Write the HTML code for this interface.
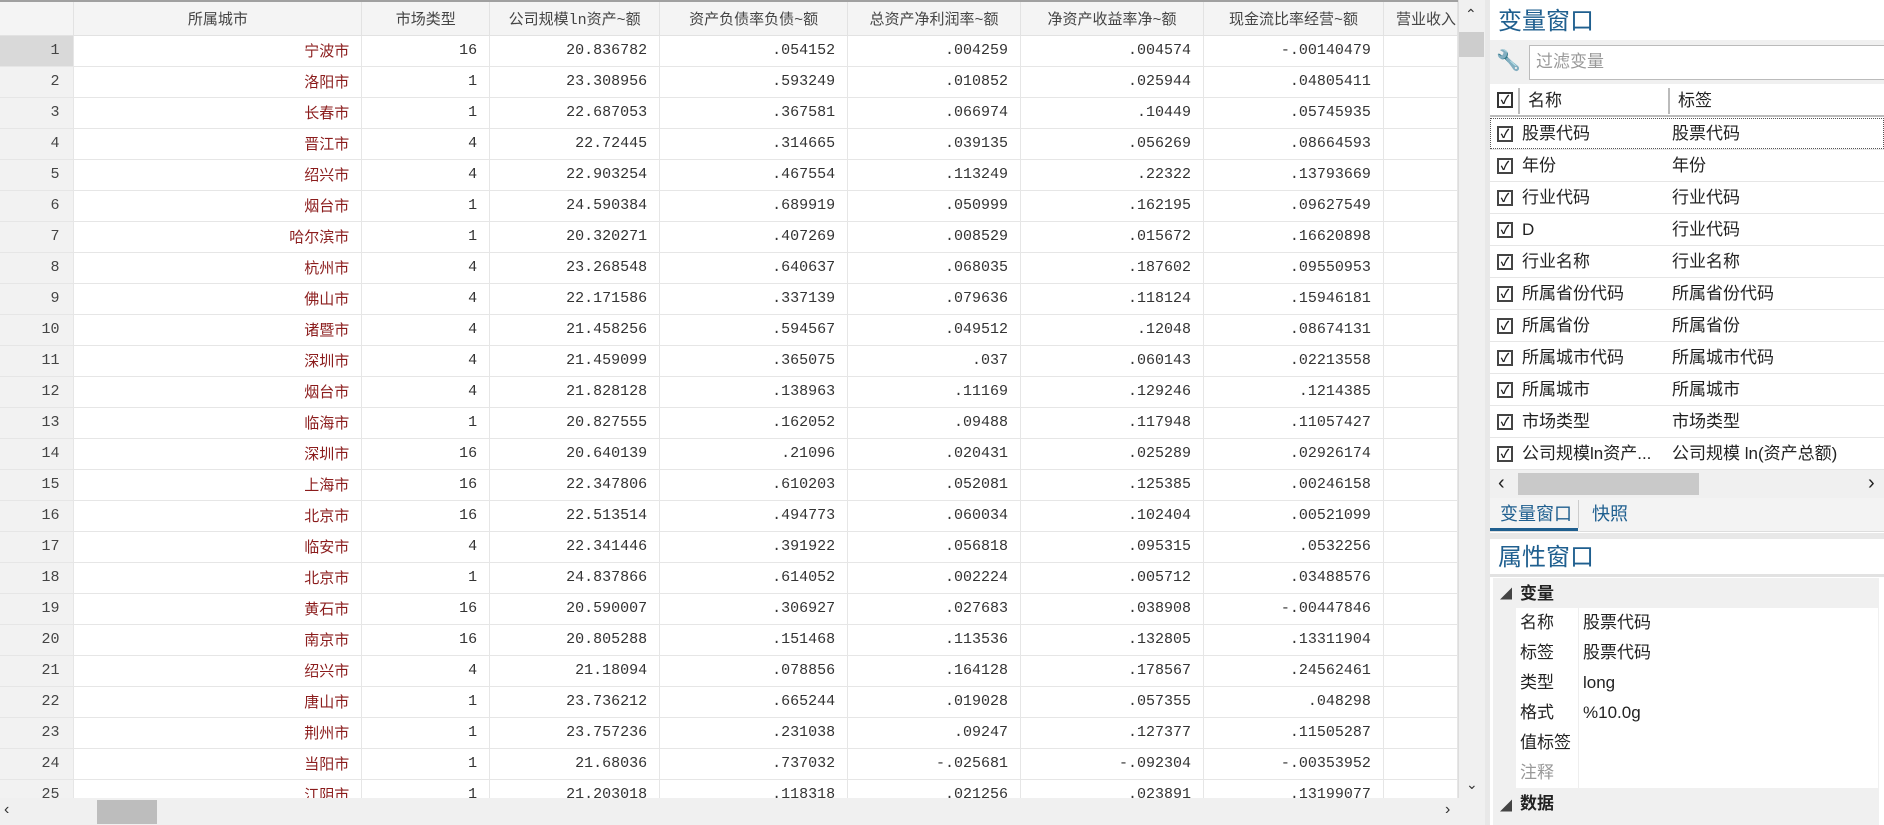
<!DOCTYPE html><html><head><meta charset="utf-8"><style>
*{margin:0;padding:0;box-sizing:border-box}
body{width:1884px;height:825px;overflow:hidden;background:#fff;font-family:"Liberation Sans","Noto Sans CJK SC",sans-serif;position:relative}
#grid{position:absolute;left:0;top:0;width:1458px;height:798px;overflow:hidden;border-top:2px solid #a0a0a0}
table{border-collapse:collapse;table-layout:fixed;font-family:"Liberation Mono","Noto Sans CJK SC",monospace;font-size:15px;color:#333}
th{height:33px;font-weight:normal;background:#f4f4f4;border-right:1px solid #e2e2e2;border-bottom:1px solid #e2e2e2;font-size:15px;color:#444;white-space:nowrap;overflow:hidden;font-family:"Liberation Mono","Noto Sans CJK SC",monospace}
td{height:31px;border-right:1px solid #e6e6e6;border-bottom:1px solid #e6e6e6;text-align:right;padding-right:12px;white-space:nowrap}
td.n{background:#f2f2f2;padding-right:14px;color:#444}
tr.s td.n{background:#d9d9d9}
td.c{color:#8b1c1c;font-family:"Liberation Sans","Noto Sans CJK SC",sans-serif;font-size:15px}
#vs{position:absolute;left:1458px;top:0;width:27px;height:798px;background:#f0f0f0;border-left:1px solid #ddd}
#hs{position:absolute;left:0;top:798px;width:1485px;height:27px;background:#f0f0f0}
#gap{position:absolute;left:1485px;top:0;width:5px;height:825px;background:#e8e8e8}
#rp{position:absolute;left:1490px;top:0;width:394px;height:825px;background:#fff;font-size:17px;color:#222}
#rp .ab{line-height:22px}
.ab{position:absolute}
.cb{position:absolute;width:16px;height:16px;border:2px solid #333;background:#fff;font-size:12px;line-height:12px;text-align:center;font-weight:bold;color:#222}
</style></head><body>
<div id="grid"><table>
<colgroup><col style="width:74px"><col style="width:288px"><col style="width:128px"><col style="width:170px"><col style="width:188px"><col style="width:173px"><col style="width:183px"><col style="width:180px"><col style="width:74px"></colgroup>
<tr><th></th><th>所属城市</th><th>市场类型</th><th>公司规模ln资产~额</th><th>资产负债率负债~额</th><th>总资产净利润率~额</th><th>净资产收益率净~额</th><th>现金流比率经营~额</th><th style="text-align:left;padding-left:12px">营业收入</th></tr>
<tr class="s"><td class="n">1</td><td class="c">宁波市</td><td>16</td><td>20.836782</td><td>.054152</td><td>.004259</td><td>.004574</td><td>-.00140479</td><td></td></tr>
<tr><td class="n">2</td><td class="c">洛阳市</td><td>1</td><td>23.308956</td><td>.593249</td><td>.010852</td><td>.025944</td><td>.04805411</td><td></td></tr>
<tr><td class="n">3</td><td class="c">长春市</td><td>1</td><td>22.687053</td><td>.367581</td><td>.066974</td><td>.10449</td><td>.05745935</td><td></td></tr>
<tr><td class="n">4</td><td class="c">晋江市</td><td>4</td><td>22.72445</td><td>.314665</td><td>.039135</td><td>.056269</td><td>.08664593</td><td></td></tr>
<tr><td class="n">5</td><td class="c">绍兴市</td><td>4</td><td>22.903254</td><td>.467554</td><td>.113249</td><td>.22322</td><td>.13793669</td><td></td></tr>
<tr><td class="n">6</td><td class="c">烟台市</td><td>1</td><td>24.590384</td><td>.689919</td><td>.050999</td><td>.162195</td><td>.09627549</td><td></td></tr>
<tr><td class="n">7</td><td class="c">哈尔滨市</td><td>1</td><td>20.320271</td><td>.407269</td><td>.008529</td><td>.015672</td><td>.16620898</td><td></td></tr>
<tr><td class="n">8</td><td class="c">杭州市</td><td>4</td><td>23.268548</td><td>.640637</td><td>.068035</td><td>.187602</td><td>.09550953</td><td></td></tr>
<tr><td class="n">9</td><td class="c">佛山市</td><td>4</td><td>22.171586</td><td>.337139</td><td>.079636</td><td>.118124</td><td>.15946181</td><td></td></tr>
<tr><td class="n">10</td><td class="c">诸暨市</td><td>4</td><td>21.458256</td><td>.594567</td><td>.049512</td><td>.12048</td><td>.08674131</td><td></td></tr>
<tr><td class="n">11</td><td class="c">深圳市</td><td>4</td><td>21.459099</td><td>.365075</td><td>.037</td><td>.060143</td><td>.02213558</td><td></td></tr>
<tr><td class="n">12</td><td class="c">烟台市</td><td>4</td><td>21.828128</td><td>.138963</td><td>.11169</td><td>.129246</td><td>.1214385</td><td></td></tr>
<tr><td class="n">13</td><td class="c">临海市</td><td>1</td><td>20.827555</td><td>.162052</td><td>.09488</td><td>.117948</td><td>.11057427</td><td></td></tr>
<tr><td class="n">14</td><td class="c">深圳市</td><td>16</td><td>20.640139</td><td>.21096</td><td>.020431</td><td>.025289</td><td>.02926174</td><td></td></tr>
<tr><td class="n">15</td><td class="c">上海市</td><td>16</td><td>22.347806</td><td>.610203</td><td>.052081</td><td>.125385</td><td>.00246158</td><td></td></tr>
<tr><td class="n">16</td><td class="c">北京市</td><td>16</td><td>22.513514</td><td>.494773</td><td>.060034</td><td>.102404</td><td>.00521099</td><td></td></tr>
<tr><td class="n">17</td><td class="c">临安市</td><td>4</td><td>22.341446</td><td>.391922</td><td>.056818</td><td>.095315</td><td>.0532256</td><td></td></tr>
<tr><td class="n">18</td><td class="c">北京市</td><td>1</td><td>24.837866</td><td>.614052</td><td>.002224</td><td>.005712</td><td>.03488576</td><td></td></tr>
<tr><td class="n">19</td><td class="c">黄石市</td><td>16</td><td>20.590007</td><td>.306927</td><td>.027683</td><td>.038908</td><td>-.00447846</td><td></td></tr>
<tr><td class="n">20</td><td class="c">南京市</td><td>16</td><td>20.805288</td><td>.151468</td><td>.113536</td><td>.132805</td><td>.13311904</td><td></td></tr>
<tr><td class="n">21</td><td class="c">绍兴市</td><td>4</td><td>21.18094</td><td>.078856</td><td>.164128</td><td>.178567</td><td>.24562461</td><td></td></tr>
<tr><td class="n">22</td><td class="c">唐山市</td><td>1</td><td>23.736212</td><td>.665244</td><td>.019028</td><td>.057355</td><td>.048298</td><td></td></tr>
<tr><td class="n">23</td><td class="c">荆州市</td><td>1</td><td>23.757236</td><td>.231038</td><td>.09247</td><td>.127377</td><td>.11505287</td><td></td></tr>
<tr><td class="n">24</td><td class="c">当阳市</td><td>1</td><td>21.68036</td><td>.737032</td><td>-.025681</td><td>-.092304</td><td>-.00353952</td><td></td></tr>
<tr><td class="n">25</td><td class="c">江阴市</td><td>1</td><td>21.203018</td><td>.118318</td><td>.021256</td><td>.023891</td><td>.13199077</td><td></td></tr>
</table></div>
<div id="vs"><div class="ab" style="left:6px;top:6px;font-size:14px;color:#333">&#8963;</div><div class="ab" style="left:0;top:32px;width:25px;height:25px;background:#cdcdcd"></div><div class="ab" style="left:7px;top:776px;font-size:14px;color:#333">&#8964;</div></div>
<div id="hs"><div class="ab" style="left:4px;top:3px;font-size:16px;color:#333">&lsaquo;</div><div class="ab" style="left:97px;top:2px;width:60px;height:24px;background:#bdbdbd"></div><div class="ab" style="left:1445px;top:3px;font-size:16px;color:#333">&rsaquo;</div></div>
<div id="gap"></div>
<div id="rp">
<div class="ab" style="left:8px;top:8px;font-size:24px;line-height:28px;color:#1f5f8f">变量窗口</div>
<div class="ab" style="left:0;top:40px;width:394px;height:44px;background:#f0f0f0"></div>
<div class="ab" style="left:6px;top:50px;font-size:20px;color:#666">&#128295;</div>
<div class="ab" style="left:39px;top:45px;width:360px;height:35px;border:1px solid #bbb;background:#fff;color:#999;font-size:17px;padding:5px 6px">过滤变量</div>
<div class="ab" style="left:0;top:84px;width:394px;height:33px;border-bottom:2px solid #bbb"></div>
<div class="cb" style="left:7px;top:92px">✓</div>
<div class="ab" style="left:28px;top:88px;width:2px;height:26px;background:#bbb"></div>
<div class="ab" style="left:38px;top:90px">名称</div>
<div class="ab" style="left:178px;top:88px;width:2px;height:26px;background:#bbb"></div>
<div class="ab" style="left:188px;top:90px">标签</div>
<div class="ab" style="left:0;top:118px;width:394px;height:31px;border:1px dotted #555"></div>
<div id="vl"></div>
<div class="ab" style="left:0;top:470px;width:394px;height:28px;background:#f0f0f0"><div class="ab" style="left:28px;top:3px;width:181px;height:22px;background:#c9c9c9"></div><div class="ab" style="left:8px;top:2px;font-size:20px">&lsaquo;</div><div class="ab" style="left:378px;top:2px;font-size:20px">&rsaquo;</div></div>
<div class="ab" style="left:0;top:498px;width:394px;height:34px;background:#f3f3f3;border-bottom:1px solid #ddd"></div>
<div class="ab" style="left:10px;top:503px;font-size:18px;color:#1f5f8f">变量窗口</div>
<div class="ab" style="left:0;top:528px;width:88px;height:3px;background:#1f5f8f"></div>
<div class="ab" style="left:88px;top:500px;width:1px;height:28px;background:#ccc"></div>
<div class="ab" style="left:102px;top:503px;font-size:18px;color:#1f5f8f">快照</div>
<div class="ab" style="left:0;top:533px;width:394px;height:6px;background:#e8e8e8"></div>
<div class="ab" style="left:8px;top:544px;font-size:24px;line-height:28px;color:#1f5f8f">属性窗口</div>
<div class="ab" style="left:0;top:574px;width:394px;height:3px;background:#e2e2e2"></div>
<div class="ab" style="left:3px;top:578px;width:386px;height:247px;background:#f0f0f0"></div>
<div class="ab" style="left:10px;top:583px;font-size:12px;color:#444">&#9698;</div>
<div class="ab" style="left:30px;top:583px;font-weight:bold">变量</div>
<div class="ab" style="left:26px;top:608px;width:362px;height:180px;background:#fff"></div>
<div class="ab" style="left:26px;top:608px;width:312px;height:180px;font-size:17px">
<div class="ab" style="left:4px;top:4px">名称</div><div class="ab" style="left:67px;top:4px">股票代码</div>
<div class="ab" style="left:4px;top:34px">标签</div><div class="ab" style="left:67px;top:34px">股票代码</div>
<div class="ab" style="left:4px;top:64px">类型</div><div class="ab" style="left:67px;top:64px">long</div>
<div class="ab" style="left:4px;top:94px">格式</div><div class="ab" style="left:67px;top:94px">%10.0g</div>
<div class="ab" style="left:4px;top:124px">值标签</div>
<div class="ab" style="left:4px;top:154px;color:#999">注释</div>
<div class="ab" style="left:62px;top:0;width:1px;height:180px;background:#eee"></div>
</div>
<div class="ab" style="left:10px;top:795px;font-size:12px;color:#444">&#9698;</div>
<div class="ab" style="left:30px;top:793px;font-weight:bold">数据</div>
</div>
<script>
var r=[["股票代码","股票代码"],["年份","年份"],["行业代码","行业代码"],["D","行业代码"],["行业名称","行业名称"],["所属省份代码","所属省份代码"],["所属省份","所属省份"],["所属城市代码","所属城市代码"],["所属城市","所属城市"],["市场类型","市场类型"],["公司规模ln资产...","公司规模 ln(资产总额)"]];
var h="";r.forEach(function(x,i){var t=118+i*32;h+='<div class="ab" style="left:0;top:'+(t+31)+'px;width:394px;height:1px;background:#e6e6e6"></div><div class="cb" style="left:7px;top:'+(t+8)+'px;border-color:#444">✓</div><div class="ab" style="left:32px;top:'+(t+5)+'px">'+x[0]+'</div><div class="ab" style="left:182px;top:'+(t+5)+'px">'+x[1]+'</div>';});
document.getElementById("vl").innerHTML=h;
</script>
</body></html>
